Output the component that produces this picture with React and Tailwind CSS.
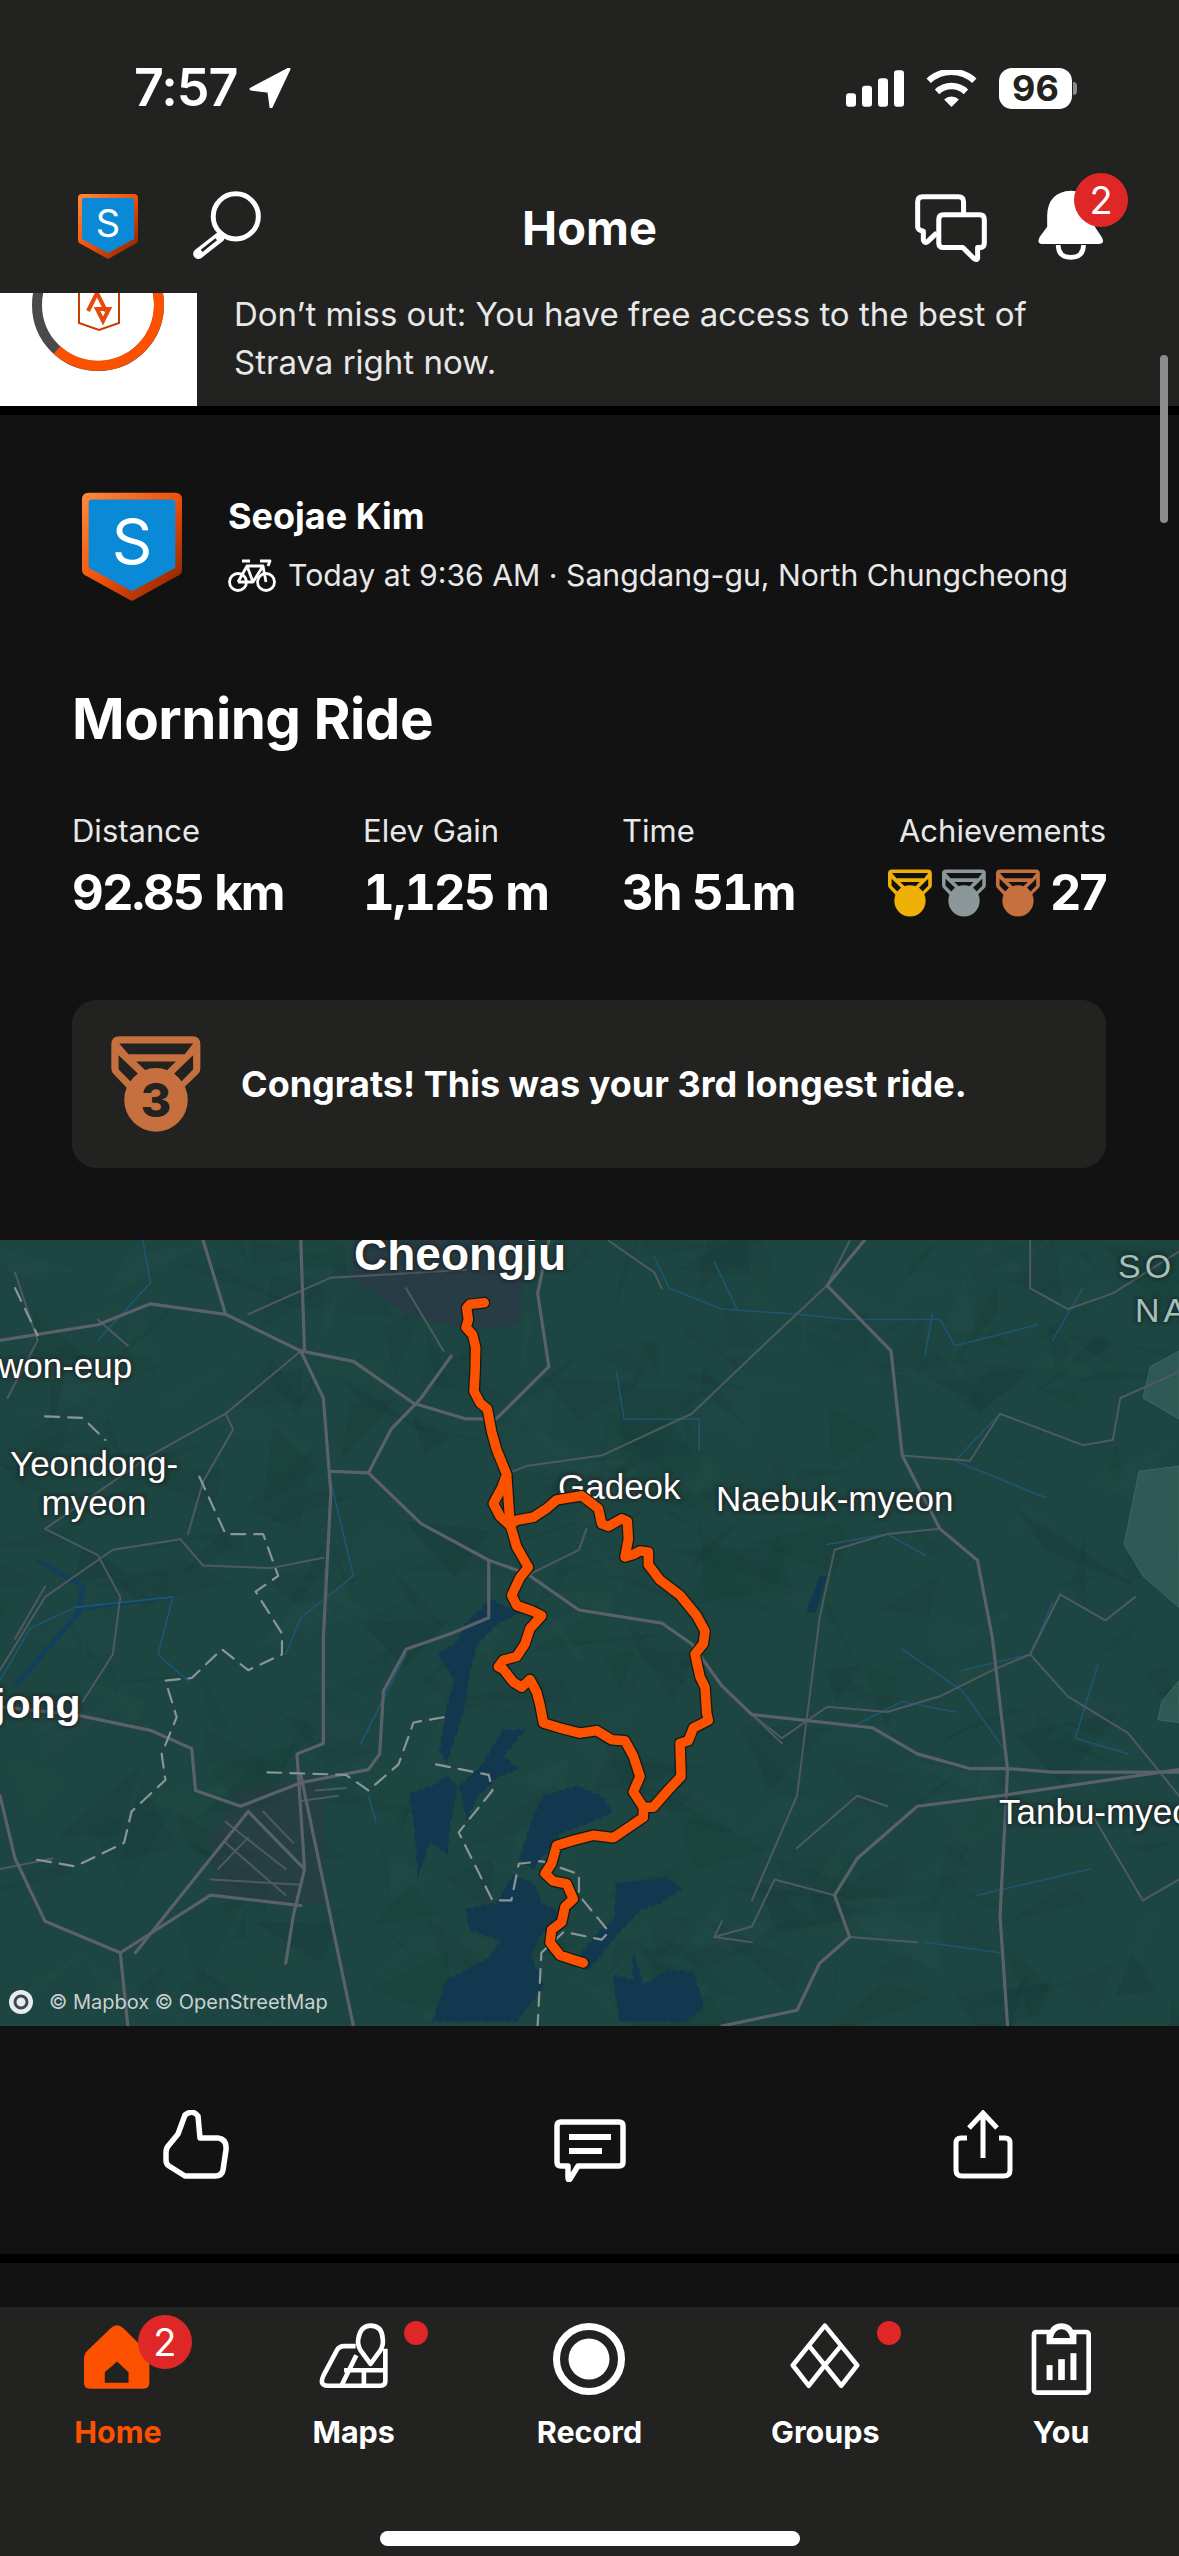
import React from "react";

const ORANGE = "#fc5200";

// map geometry is in the coordinates of the zoomed crop, the svg viewBox squashes it onto the panel
const ROADS = [
  "M1568 1055 L1400 1055 L1340 1048 L1290 1048 L1220 1020 L1160 970 L1000 945 L960 890 L920 810 L880 770 L770 745 L700 675 L650 650 L560 580 L490 483 L440 480",
  "M400 250 L430 340 L440 520 L430 800 L430 1000 L395 1020 L405 1240 L390 1330 L380 1420",
  "M400 38 L405 250",
  "M0 230 L130 200 L200 160 L300 180 L400 250 L470 270 L550 350 L620 380 L660 380 L730 280 L715 140 L730 38",
  "M650 650 L650 760 L600 790 L540 820 L510 900 L505 1020 L490 1050 L400 1075 L320 1120 L260 1090 L255 1010 L200 975 L100 945 L0 930",
  "M1340 1050 L1320 800 L1300 650 L1250 590 L1200 450 L1185 250 L1100 125 L1150 38",
  "M1568 1050 L1330 1100 L1220 1120 L1140 1220 L1110 1290 L1130 1370 L1090 1420 L1060 1510 L960 1540",
  "M0 1100 L20 1220 L60 1340 L160 1400 L280 1290 L400 1310",
  "M160 1400 L170 1540",
  "M405 1240 L330 1130 L180 1400",
  "M1340 1050 L1330 1330 L1340 1540",
  "M490 483 L520 400 L560 340 L600 260",
  "M400 1060 L470 1540",
  "M270 38 L300 180",
];
const MINOR_ROADS = [
  "M1100 125 L1000 260 L920 370 L800 450 L700 470 L665 490",
  "M60 590 L130 640 L160 720 L150 830 L110 920",
  "M240 610 L150 630 L60 720 L0 860",
  "M240 610 L270 660 L360 665 L430 645",
  "M300 370 L310 400 L270 500 L250 600",
  "M400 250 L300 370 L200 450 L60 590",
  "M130 190 L170 240 M20 100 L50 230 L10 340",
  "M440 110 L620 95 M540 130 L590 250 M330 180 L440 110",
  "M1320 860 L1250 910 L1180 940 L1100 930 L1040 990 L1000 945",
  "M1250 590 L1180 600 L1110 630 L1090 760 L1060 1100 L1000 1300",
  "M1320 860 L1370 830 L1420 910 L1500 980 L1568 1100",
  "M1510 720 L1470 765 L1410 715 L1370 830",
  "M1568 290 L1490 340 L1480 420 L1440 430 L1330 370 L1290 460 L1200 450",
  "M780 590 L770 630 L700 680",
  "M950 1370 L1000 1350 L1030 1260 L1110 1290",
  "M300 1150 L380 1240 M330 1180 L290 1240 M350 1130 L390 1190 M300 1190 L380 1290 M280 1260 L400 1270",
  "M420 1090 L460 1085 M400 1110 L450 1100",
  "M1100 125 L1130 40 M810 40 L870 100 L880 130",
  "M1000 945 L1040 1000 M1180 1120 L1140 1100 L1060 1200",
  "M1568 60 L1480 140 L1420 170 L1370 130 L1370 40",
  "M60 700 L20 800 M0 1240 L70 1220",
  "M1220 1380 L1130 1370 M960 1340 L950 1370 L1000 1380",
  "M1450 1130 L1520 1300 L1568 1260",
];
const BORDERS = [
  "M265 490 L300 600 L350 600 L370 680 L340 710 L375 790 L375 830 L330 860 L295 820 L255 875 L220 880 L235 950 L215 1020 L220 1070 L175 1130 L165 1190 L100 1235 L40 1220",
  "M590 950 L550 960 L530 1040 L490 1090 L460 1060 L350 1055",
  "M580 1040 L650 1060 L655 1090 L610 1170 L655 1300 L680 1300 L690 1230 L720 1225 L770 1250 L770 1290 L810 1360 L800 1375 L750 1360 L720 1400 L715 1540",
  "M60 375 L110 378 L140 420",
  "M20 130 L50 220",
];
const RIVERS = [
  "M0 880 L40 780 L100 740 L230 720 L210 830 L250 880",
  "M190 38 L200 120 L130 230",
  "M870 70 L890 130 L960 170 L1060 180 L1130 190 L1250 190 L1270 240 L1380 200",
  "M820 290 L830 380 L930 380 L930 440",
  "M1290 430 L1330 370 L1270 460 L1390 530",
  "M1100 620 L1180 600 L1230 640",
  "M1200 820 L1280 900 L1340 1020",
  "M1400 230 L1440 130 M1240 180 L1230 260",
  "M1460 850 L1430 990 L1500 1020",
  "M1400 730 L1370 830 L1280 860",
  "M440 500 L470 680 L400 760 L380 830",
  "M1230 1380 L1330 1400 M1300 1290 L1450 1240",
  "M490 1100 L500 1150 M540 830 L480 1000",
  "M950 80 L980 170 M1130 970 L1200 920 L1270 940",
];
// these follow the tighter crop of the route, see the group transform below
const LAKE = [
  "M575 745 L650 770 L590 790 L530 830 L510 880 L490 960 L470 1000 L440 1060 L420 1040 L440 960 L465 900 L415 850 L470 830 L500 790Z",
  "M330 1125 L400 1110 L440 1090 L470 1110 L450 1180 L440 1240 L390 1215 L355 1280 L345 1190Z",
  "M480 1110 L545 1070 L610 1000 L670 1000 L610 1050 L650 1075 L590 1090 L530 1130 L500 1170Z",
  "M660 1250 L700 1170 L730 1130 L830 1110 L905 1130 L935 1160 L860 1180 L780 1200 L740 1235 L700 1270Z",
  "M500 1350 L590 1340 L640 1285 L700 1300 L725 1340 L790 1360 L720 1400 L690 1440 L730 1500 L650 1568 L400 1568 L440 1490 L560 1450 L610 1410 L510 1390Z",
  "M950 1300 L1100 1290 L1140 1310 L1085 1335 L1020 1350 L955 1395 L900 1440 L860 1470 L830 1450 L890 1400 L945 1370Z",
  "M1000 1440 L1030 1500 L1110 1470 L1180 1475 L1210 1540 L1160 1568 L960 1568 L940 1480 L1000 1490Z",
];
const ROUTE = [
  "M553 162 L510 165 L500 172 L505 195 L498 210 L518 225 L527 250 L525 300 L522 335 L540 358 L562 370 L575 415 L590 450 L620 498 L605 525 L580 555 L600 580 L628 597 L650 588 L700 582 L740 565 L770 548 L845 540 L895 565 L905 595 L925 600 L965 585 L982 590 L985 625 L975 660 L1000 655 L1020 648 L1045 650 L1045 675 L1080 705 L1140 735 L1190 775 L1215 805 L1210 830 L1185 850 L1200 895 L1215 915 L1220 965 L1225 980 L1180 995 L1165 1020 L1140 1025 L1143 1090 L1100 1120 L1060 1150 L1030 1150 L1030 1170 L985 1190 L940 1210 L880 1205 L820 1215 L770 1225 L755 1260 L735 1280 L760 1295 L800 1300 L820 1330 L795 1345 L785 1375 L755 1390 L750 1415 L780 1440 L815 1448 L850 1455",
  "M1030 1150 L1000 1120 L1020 1090 L1000 1050 L975 1020 L935 1018 L890 1000 L840 1005 L780 995 L730 985 L720 950 L710 925 L690 900 L665 915 L640 905 L610 880 L595 875 L610 862 L650 855 L675 830 L690 800 L725 775 L695 765 L650 755 L635 735 L660 700 L685 680 L650 640 L630 595 L620 500",
];

let seed = 11;
const rnd = () => {
  seed = (seed * 16807) % 2147483647;
  return seed / 2147483647;
};
const TERRAIN = [];
for (let i = 0; i < 420; i++) {
  const x = rnd() * 1568;
  const y = 38 + rnd() * 1502;
  const pts = [0, 1, 2].map(() => [x + (rnd() - 0.5) * 170, y + (rnd() - 0.5) * 170].join(","));
  TERRAIN.push({
    pts: pts.join(" "),
    fill: rnd() > 0.35 ? "#133432" : "#2a5551",
    op: 0.06 + rnd() * 0.13,
  });
}

const Line = ({ d, stroke, width, dash }) => (
  <path
    d={d}
    fill="none"
    stroke={stroke}
    strokeWidth={width}
    strokeDasharray={dash}
    strokeLinejoin="round"
    strokeLinecap="round"
    vectorEffect="non-scaling-stroke"
  />
);

const Shield = ({ id, className, letterSize = 38 }) => (
  <svg viewBox="0 0 60 65" className={className}>
    <defs>
      <linearGradient id={id} x1="0" y1="0" x2="1" y2="1">
        <stop offset="0" stopColor="#ff8a3c" />
        <stop offset="0.5" stopColor="#f0500a" />
        <stop offset="1" stopColor="#7a1c00" />
      </linearGradient>
    </defs>
    <path
      d="M4 0 H56 Q60 0 60 4 V46 Q60 49 57 50 L31 64.5 Q30 65 29 64.5 L3 50 Q0 49 0 46 V4 Q0 0 4 0Z"
      fill={`url(#${id})`}
    />
    <path d="M6 4 H54 Q56 4 56 6 V45 L30 59 L4 45 V6 Q4 4 6 4Z" fill="#0a8ad6" />
    <text
      x="30"
      y="43"
      textAnchor="middle"
      fill="#fff"
      fontSize={letterSize}
      fontFamily="Inter, sans-serif"
    >
      S
    </text>
  </svg>
);

const Medal = ({ color, className, digit }) => (
  <svg viewBox="93 47 270 290" className={className}>
    <path
      fill={color}
      fillRule="evenodd"
      d="M118 48 H338 Q362 48 362 72 V145 Q362 155 355 162 L300 215 L150 215 L100 162 Q93 155 93 145 V72 Q93 48 118 48Z M117 70 H340 L315 102 H145Z M168 124 H288 L262 150 H195Z M115 105 L173 160 L152 185 L115 148Z M340 105 L283 160 L304 185 L340 148Z"
    />
    <circle cx="228" cy="240" r="96" fill={color} />
    {digit && (
      <text
        x="228"
        y="291"
        textAnchor="middle"
        fill="#222220"
        fontSize="140"
        fontWeight="800"
        fontFamily="Inter, sans-serif"
      >
        {digit}
      </text>
    )}
  </svg>
);

const Badge = ({ className, children }) => (
  <span
    className={`absolute flex items-center justify-center rounded-full bg-[#e02727] text-white ${className}`}
  >
    {children}
  </span>
);

const Stat = ({ label, value, className }) => (
  <div className={className}>
    <p className="text-[31px] leading-[40px] text-[#e8e8e8]">{label}</p>
    <p className="mt-[12px] text-[49px] leading-[60px] font-bold text-white tabular-nums tracking-[-1.8px]">{value}</p>
  </div>
);

const MapLabel = ({ className, children }) => (
  <span
    className={`absolute whitespace-nowrap font-['Liberation_Sans',sans-serif] [text-shadow:0_0_4px_#222,0_0_4px_#222] ${className}`}
  >
    {children}
  </span>
);

const NavItem = ({ label, active, children }) => (
  <div className="relative flex flex-col items-center">
    <div className="flex h-[86px] w-full items-end justify-center">{children}</div>
    <span
      className={`mt-[1px] text-[30.5px] leading-[44px] font-bold ${active ? "text-[#fc5200]" : "text-white"}`}
    >
      {label}
    </span>
  </div>
);

export default function App() {
  return (
    <div className="relative flex h-[2556px] w-[1179px] flex-col overflow-hidden bg-[#121212] font-['Inter',sans-serif]">
      {/* status bar */}
      <div className="flex h-[176px] shrink-0 items-center justify-between bg-[#222220] pl-[134px] pr-[102px]">
        <div className="flex items-center gap-[12px]">
          <span className="text-[52px] leading-none font-semibold text-white tracking-[-1px]">7:57</span>
          <svg viewBox="0 0 40 38" className="h-[40px] w-[42px]">
            <path d="M38 1 L2 20 L19 22 L21 37Z" fill="#fff" stroke="#fff" strokeWidth="3" strokeLinejoin="round" />
          </svg>
        </div>
        <div className="flex items-center">
          <svg viewBox="78 58 174 110" className="h-[37px] w-[58px]">
            <rect x="78" y="127" width="30" height="41" rx="9" fill="#fff" />
            <rect x="126" y="105" width="30" height="63" rx="9" fill="#fff" />
            <rect x="174" y="82" width="30" height="86" rx="9" fill="#fff" />
            <rect x="222" y="58" width="30" height="110" rx="9" fill="#fff" />
          </svg>
          <svg viewBox="318 58 152 110" className="ml-[22px] h-[37px] w-[51px]">
            <path d="M326 90 A100 100 0 0 1 462 90" fill="none" stroke="#fff" strokeWidth="19" />
            <path d="M351 123 A62 62 0 0 1 437 123" fill="none" stroke="#fff" strokeWidth="19" />
            <path d="M394 168 L372 146 A31 31 0 0 1 416 146Z" fill="#fff" />
          </svg>
          <div className="ml-[22px] flex items-center gap-[1px]">
            <div className="flex h-[41px] w-[73px] items-center justify-center rounded-[13px] bg-white text-[36px] leading-none font-bold text-[#222220]">
              96
            </div>
            <div className="h-[13px] w-[4px] rounded-r-full bg-[#8c8c8c]" />
          </div>
        </div>
      </div>

      {/* top nav */}
      <div className="relative flex h-[117px] shrink-0 items-start justify-between bg-[#222220] pl-[78px] pr-[74px]">
        <div className="flex items-start gap-[54px] pt-[15px]">
          <Shield id="navShield" className="mt-[3px] h-[65px] w-[60px]" />
          <svg viewBox="395 93 208 207" className="h-[69px] w-[69px]">
            <circle cx="527" cy="169" r="68" fill="none" stroke="#fff" strokeWidth="15" />
            <path d="M478 232 L414 282" stroke="#fff" strokeWidth="31" strokeLinecap="round" />
            <path d="M468 238 L424 273" stroke="#222220" strokeWidth="8" />
          </svg>
        </div>
        <h1 className="absolute left-0 right-0 top-[24px] text-center text-[47px] leading-[56px] font-bold text-white">
          Home
        </h1>
        <div className="flex items-start gap-[51px] pt-[14px]">
          <svg viewBox="285 432 215 206" className="mt-[4px] h-[69px] w-[72px]">
            <g fill="none" stroke="#fff" strokeWidth="15" strokeLinejoin="round">
              <path d="M430 490 V455 Q430 440 415 440 H308 Q293 440 293 455 V530 Q293 540 310 543 V570 Q315 582 325 572 L350 548" />
              <path d="M370 494 H478 Q492 494 492 508 V578 Q492 592 478 592 H472 V622 Q470 632 460 624 L428 592 H370 Q356 592 356 578 V508 Q356 494 370 494Z" />
            </g>
          </svg>
          <div className="relative h-[70px] w-[67px]">
            <svg viewBox="655 420 200 210" className="h-[70px] w-[67px]">
              <path d="M753 422 Q685 425 682 495 V530 L660 560 Q648 582 670 582 H835 Q858 582 845 560 L825 530 V495 Q822 425 753 422Z" fill="#fff" />
              <path d="M715 585 Q715 622 753 622 Q791 622 791 585" fill="none" stroke="#fff" strokeWidth="14" />
            </svg>
            <Badge className="left-[36px] top-[-17px] h-[54px] w-[54px] text-[38px] leading-none">2</Badge>
          </div>
        </div>
      </div>

      {/* promo banner */}
      <div className="flex h-[113px] shrink-0 bg-[#222220]">
        <div className="h-full w-[197px] shrink-0 overflow-hidden bg-white">
          <svg viewBox="0 0 197 113" className="h-[113px] w-[197px]">
            <circle cx="98" cy="12" r="61" fill="none" stroke="#4a4a4a" strokeWidth="10" />
            <path d="M57 57 A61 61 0 0 0 159 12 A61 61 0 0 0 140 -32" fill="none" stroke={ORANGE} strokeWidth="10" />
            <path d="M79 -10 H119 V30 L99 37 L79 30Z" fill="#fff" stroke="#c93c00" strokeWidth="2" />
            <path d="M88 18 L97 0 L106 18 M97 16 L103 28 L109 16Z" fill="none" stroke="#e64a0a" strokeWidth="4" />
          </svg>
        </div>
        <p className="mt-[-3px] pl-[37px] text-[33px] leading-[48px] text-[#e8e8e8]">
          Don’t miss out: You have free access to the best of
          <br />
          Strava right now.
        </p>
      </div>
      <div className="h-[9px] shrink-0 bg-black" />

      {/* activity card */}
      <div className="flex h-[825px] shrink-0 flex-col bg-[#121212] pl-[72px] pr-[73px]">
        <div className="flex items-start pl-[10px] pt-[77px]">
          <Shield id="cardShield" className="h-[110px] w-[100px]" />
          <div className="pl-[46px]">
            <p className="mt-[2px] text-[36px] leading-[44px] font-bold text-white">Seojae Kim</p>
            <div className="mt-[17px] flex items-center gap-[12px]">
              <svg viewBox="0 0 48 33" className="h-[33px] w-[48px]" fill="none" stroke="#fff" strokeWidth="2.8">
                <circle cx="10" cy="23" r="8.5" />
                <circle cx="38" cy="23" r="8.5" />
                <path d="M10 23 L19 7 H35 L38 23 M19 7 L25 23 H10 M25 23 L35 7 M14 2 H22 M32 2 H42 L40 7" strokeLinejoin="round" />
              </svg>
              <span className="whitespace-nowrap text-[30.2px] leading-[40px] text-[#e8e8e8]">
                Today at 9:36 AM · Sangdang-gu, North Chungcheong
              </span>
            </div>
          </div>
        </div>

        <h2 className="mt-[82px] text-[56.5px] leading-[70px] font-bold text-white tracking-[-0.5px]">Morning Ride</h2>

        <div className="mt-[57px] flex">
          <Stat label="Distance" value="92.85 km" className="w-[291px]" />
          <Stat label="Elev Gain" value="1,125 m" className="w-[259px]" />
          <Stat label="Time" value="3h 51m" className="w-[230px]" />
          <div className="flex flex-1 flex-col items-end">
            <p className="text-[31px] leading-[40px] text-[#e8e8e8]">Achievements</p>
            <div className="mt-[12px] flex h-[60px] items-center">
              <Medal color="#efb008" className="h-[48px] w-[44px]" />
              <Medal color="#8b9799" className="ml-[10px] h-[48px] w-[44px]" />
              <Medal color="#c66f3f" className="ml-[10px] h-[48px] w-[44px]" />
              <span className="ml-[10px] text-[49px] font-bold text-white tracking-[-1.8px]">27</span>
            </div>
          </div>
        </div>

        <div className="mt-[77px] flex h-[168px] items-center rounded-[24px] bg-[#222220] pl-[39px]">
          <Medal color="#c66f3f" digit="3" className="h-[96px] w-[90px]" />
          <p className="pl-[40px] text-[36px] font-bold text-white">Congrats! This was your 3rd longest ride.</p>
        </div>
      </div>

      {/* map */}
      <div className="relative h-[786px] shrink-0 overflow-hidden bg-[#1d4541]">
        <svg viewBox="0 38 1568 1502" preserveAspectRatio="none" className="absolute inset-0 h-full w-full">
          {TERRAIN.map((t, i) => (
            <polygon key={i} points={t.pts} fill={t.fill} opacity={t.op} />
          ))}
          <path d="M470 38 H700 L690 200 L620 210 L540 180 L470 110Z" fill="#2b3a46" opacity="0.8" />
          <path d="M320 1090 L430 1060 L430 1310 L290 1290 L280 1180Z" fill="#2c3a44" opacity="0.55" />
          <path d="M1530 280 L1568 250 V380 L1520 340Z M1515 480 L1568 470 V740 L1520 680 L1495 620Z M1545 920 L1568 880 V960 L1540 955Z" fill="#3d6a64" stroke="#6f9a92" strokeWidth="1" opacity="0.55" />
          <g transform="translate(399 0) scale(0.4433 0.9755)">
            {LAKE.map((d, i) => (
              <path key={i} d={d} fill="#123850" stroke="#123850" strokeWidth="6" strokeDasharray="14 9" />
            ))}
          </g>
          <path d="M1090 680 L1100 680 L1085 750 L1072 750Z" fill="#123850" />
          <path d="M50 650 L110 700 L105 750 L20 890" fill="none" stroke="#123f5c" strokeWidth="7" />
          <path d="M100 745 L230 720" fill="none" stroke="#123f5c" strokeWidth="5" />
          {RIVERS.map((d, i) => (
            <Line key={i} d={d} stroke="#1d5672" width="1.6" />
          ))}
          {MINOR_ROADS.map((d, i) => (
            <Line key={i} d={d} stroke="#4f5a60" width="2" />
          ))}
          {ROADS.map((d, i) => (
            <Line key={i} d={d} stroke="#5a6169" width="3.2" />
          ))}
          {BORDERS.map((d, i) => (
            <Line key={i} d={d} stroke="#8b9496" width="2.2" dash="14 9" />
          ))}
        </svg>

        <MapLabel className="left-[354px] top-[-10px] text-[46px] leading-[48px] font-bold text-white">Cheongju</MapLabel>
        <MapLabel className="left-[-2px] top-[106px] text-[35px] leading-[40px] text-white">won-eup</MapLabel>
        <MapLabel className="left-[10px] top-[204px] text-center text-[35px] leading-[39px] text-white">
          Yeondong-
          <br />
          myeon
        </MapLabel>
        <MapLabel className="left-[558px] top-[227px] text-[35px] leading-[40px] text-white">Gadeok</MapLabel>
        <MapLabel className="left-[716px] top-[239px] text-[35px] leading-[40px] text-white">Naebuk-myeon</MapLabel>
        <MapLabel className="left-[-6px] top-[440px] text-[41px] leading-[48px] font-bold text-white">jong</MapLabel>
        <MapLabel className="left-[999px] top-[552px] text-[35px] leading-[40px] text-white">Tanbu-myeon</MapLabel>
        <MapLabel className="left-[1118px] top-[6px] text-[34px] leading-[40px] tracking-[4px] text-[#9cc4bb]">SO</MapLabel>
        <MapLabel className="left-[1135px] top-[50px] text-[34px] leading-[40px] tracking-[4px] text-[#9cc4bb]">NA</MapLabel>

        <svg viewBox="0 38 1568 1502" preserveAspectRatio="none" className="absolute inset-0 h-full w-full">
          <g transform="translate(399 0) scale(0.4433 0.9755)">
            {ROUTE.map((d, i) => (
              <Line key={i} d={d} stroke="#0c1a1a" width="12" />
            ))}
            {ROUTE.map((d, i) => (
              <Line key={i} d={d} stroke={ORANGE} width="9.5" />
            ))}
          </g>
        </svg>

        <div className="absolute bottom-[10px] left-[8px] flex items-center gap-[15px]">
          <svg viewBox="0 0 26 26" className="h-[26px] w-[26px]">
            <circle cx="13" cy="13" r="12" fill="#e8eced" />
            <circle cx="13" cy="13" r="6" fill="none" stroke="#3b4a50" strokeWidth="3" />
          </svg>
          <span className="text-[20px] leading-[28px] text-[#c9d0d0]">© Mapbox © OpenStreetMap</span>
        </div>
      </div>

      {/* kudos, comment, share */}
      <div className="grid h-[228px] shrink-0 grid-cols-3 items-start bg-[#121212] pt-[84px]">
        <div className="flex justify-center">
          <svg viewBox="0 0 66 69" className="ml-[-1px] h-[69px] w-[66px]" fill="none" stroke="#fff" strokeWidth="5.5" strokeLinejoin="round">
            <path d="M22 5 Q30 -1 35 6 L37 28 H55 Q64 29 63 40 L60 60 Q59 66 52 66 H22 L6 56 Q3 54 3 50 V42 Q3 38 6 35 L15 24Z" />
          </svg>
        </div>
        <div className="flex justify-center">
          <svg viewBox="0 0 72 63" className="mt-[9px] h-[63px] w-[72px]">
            <path d="M7 3 H65 Q69 3 69 7 V43 Q69 47 65 47 H24 L16 60 Q14 62 14 58 V47 H7 Q3 47 3 43 V7 Q3 3 7 3Z" fill="none" stroke="#fff" strokeWidth="5.5" strokeLinejoin="round" />
            <rect x="15" y="15" width="42" height="6" fill="#fff" />
            <rect x="15" y="29" width="33" height="6" fill="#fff" />
          </svg>
        </div>
        <div className="flex justify-center">
          <svg viewBox="0 0 60 69" className="h-[69px] w-[60px]" fill="none" stroke="#fff" strokeWidth="5">
            <path d="M30 3 V48 M16 18 L30 3 L44 18" />
            <path d="M14 28 H8 Q3 28 3 33 V60 Q3 66 9 66 H51 Q57 66 57 60 V33 Q57 28 52 28 H46" />
          </svg>
        </div>
      </div>
      <div className="h-[9px] shrink-0 bg-black" />
      <div className="h-[44px] shrink-0 bg-[#121212]" />

      {/* tab bar */}
      <div className="flex h-[249px] shrink-0 flex-col items-center bg-[#222220] pt-[16px]">
        <div className="grid w-full grid-cols-5">
          <NavItem label="Home" active>
            <div className="relative h-[64px] w-[66px] -translate-x-[1px] -translate-y-[20px]">
              <svg viewBox="75 48 200 192" className="h-[64px] w-[66px]">
                <path
                  fillRule="evenodd"
                  fill={ORANGE}
                  d="M175 48 Q165 48 155 58 L85 125 Q75 135 75 150 V222 Q75 240 93 240 H255 Q273 240 273 222 V150 Q273 135 263 125 L195 58 Q185 48 175 48Z M175 158 L138 190 V222 H210 V190Z"
                />
              </svg>
              <Badge className="left-[54px] top-[-10px] h-[54px] w-[54px] text-[38px] leading-none">2</Badge>
            </div>
          </NavItem>
          <NavItem label="Maps">
            <div className="relative h-[66px] w-[70px] -translate-y-[20px]">
              <svg viewBox="770 42 210 200" className="h-[66px] w-[70px]" fill="none" stroke="#fff" strokeWidth="14" strokeLinejoin="round">
                <path d="M880 112 H845 Q830 112 823 125 L783 200 Q768 232 795 232 H955 Q970 232 970 218 V120" />
                <path d="M925 166 L895 125 Q885 108 888 90 Q895 50 925 50 Q960 50 962 90 Q965 108 955 125Z" />
                <path d="M882 140 L838 230 M845 185 H968 M905 185 V232" />
              </svg>
              <span className="absolute left-[85px] top-[-2px] h-[24px] w-[24px] rounded-full bg-[#e02727]" />
            </div>
          </NavItem>
          <NavItem label="Record">
            <svg viewBox="0 0 72 72" className="h-[72px] w-[72px] -translate-y-[14px]">
              <circle cx="36" cy="36" r="32.5" fill="none" stroke="#fff" strokeWidth="7" />
              <circle cx="36" cy="36" r="20.5" fill="#fff" />
            </svg>
          </NavItem>
          <NavItem label="Groups">
            <div className="relative h-[66px] w-[72px] -translate-y-[20px]">
              <svg viewBox="145 42 215 200" className="h-[66px] w-[72px]" fill="none" stroke="#fff" strokeWidth="14" strokeLinejoin="round">
                <path d="M252 50 L350 170 L302 232 L252 170 L203 232 L155 170Z" />
                <path d="M205 112 L252 170 L300 112" />
              </svg>
              <span className="absolute left-[88px] top-[-2px] h-[24px] w-[24px] rounded-full bg-[#e02727]" />
            </div>
          </NavItem>
          <NavItem label="You">
            <svg viewBox="868 42 184 218" className="h-[73px] w-[61px] -translate-y-[13px]">
              <rect x="877" y="68" width="165" height="183" rx="7" fill="none" stroke="#fff" strokeWidth="14" />
              <path d="M915 62 H925 Q935 42 960 42 Q985 42 995 62 H1005 V105 H915Z" fill="#fff" />
              <path d="M934 86 Q940 60 960 60 Q980 60 986 86Z" fill="#222220" />
              <rect x="915" y="168" width="18" height="45" fill="#fff" />
              <rect x="950" y="150" width="20" height="63" fill="#fff" />
              <rect x="987" y="132" width="18" height="81" fill="#fff" />
            </svg>
          </NavItem>
        </div>
        <div className="mt-[77px] h-[15px] w-[420px] rounded-full bg-white" />
      </div>

      {/* scroll indicator */}
      <div className="absolute left-[1160px] top-[355px] h-[168px] w-[8px] rounded-full bg-[#8c8c8c]" />
    </div>
  );
}
